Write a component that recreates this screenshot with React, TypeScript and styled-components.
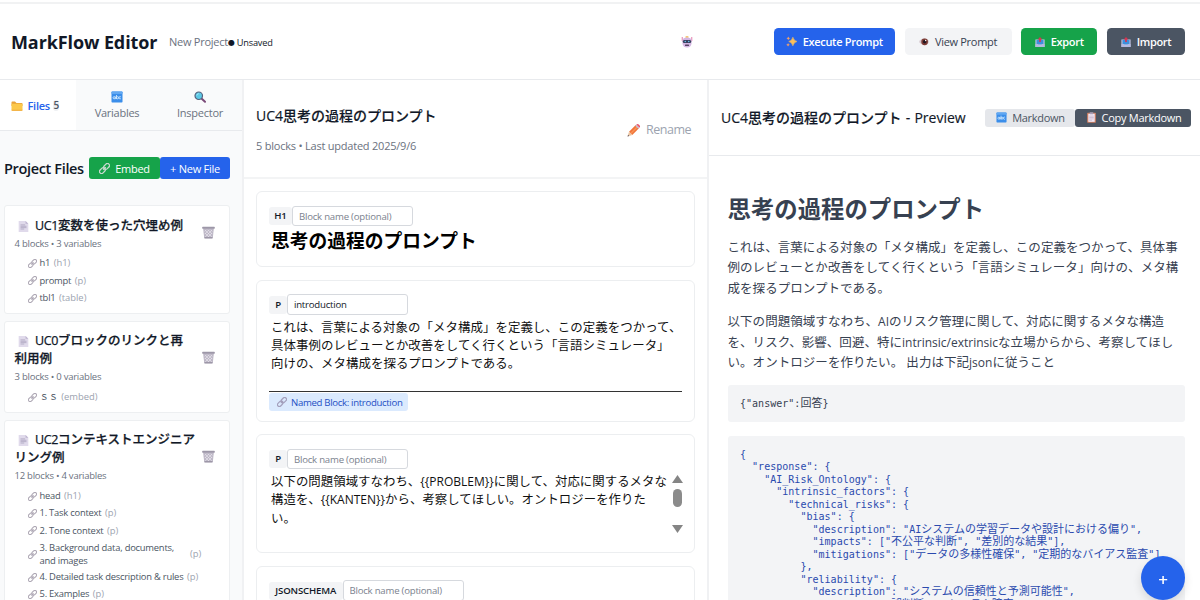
import React from "react";
import styled, { createGlobalStyle, css } from "styled-components";

const sans = `"Open Sans", "Noto Sans CJK JP", sans-serif`;
const mono = `"DejaVu Sans Mono", "Noto Sans CJK JP", monospace`;

const GlobalStyle = createGlobalStyle`
  *, *::before, *::after { box-sizing: border-box; }
  html, body { margin: 0; padding: 0; overflow: hidden; }
  body { font-family: ${sans}; background: #fff; color: #111827; }
  button, input { font-family: inherit; margin: 0; }
  h1, h2, h3, p, pre { margin: 0; }
`;

/* ---------- icons ---------- */

const Icon = styled.svg<{ $size: number; $faded?: boolean }>`
  width: ${(p) => p.$size}px;
  height: ${(p) => p.$size}px;
  flex: none;
  display: block;
  opacity: ${(p) => (p.$faded ? 0.7 : 1)};
`;

type IconProps = { size: number; faded?: boolean };

const FolderIcon = ({ size }: IconProps) => (
  <Icon $size={size} viewBox="0 0 24 24">
    <path d="M1 4.5Q1 3 2.5 3H8l3 3h10.500Q23 6 23 7.500V12H1z" fill="#e8a33a" />
    <rect x="1" y="7.500" width="22" height="14" rx="1.500" fill="#fcc84a" />
    <path d="M1 19.500h22v.500Q23 21.500 21.500 21.500h-19Q1 21.500 1 20z" fill="#f0ab3c" />
  </Icon>
);

const AbcIcon = ({ size }: IconProps) => (
  <Icon $size={size} viewBox="0 0 24 24">
    <rect x="1" y="1" width="22" height="22" rx="1.500" fill="#3b8eea" />
    <rect x="1" y="1" width="22" height="5" rx="1.500" fill="#62a8f2" />
    <g fill="none" stroke="#d6ecff" strokeWidth="1.700">
      <circle cx="6.300" cy="13.500" r="2.200" />
      <path d="M8.700 11v5.200M11 8v8.200M19.800 12a2.300 2.300 0 1 0 0 3" />
      <circle cx="13.200" cy="13.500" r="2.200" />
    </g>
  </Icon>
);

const SearchIcon = ({ size }: IconProps) => (
  <Icon $size={size} viewBox="0 0 24 24">
    <path d="M15.500 15.500l6.500 6" stroke="#7a4a78" strokeWidth="4" strokeLinecap="round" />
    <circle cx="9.500" cy="9.500" r="7.500" fill="#5cc9e6" stroke="#56617c" strokeWidth="2.400" />
    <path d="M5.500 9a4.500 4.500 0 0 1 4-3.800" fill="none" stroke="#b5effa" strokeWidth="1.600" />
  </Icon>
);

const LinkIcon = ({ size, faded, tone = "#8d8496" }: IconProps & { tone?: string }) => (
  <Icon $size={size} $faded={faded} viewBox="0 0 24 24">
    <g fill="none" stroke={tone} strokeWidth="2.800" transform="rotate(-45 12 12)">
      <rect x="-1.500" y="7.500" width="14" height="9" rx="4.500" />
      <rect x="11.500" y="7.500" width="14" height="9" rx="4.500" />
      <path d="M8 12h8" />
    </g>
  </Icon>
);

const PageIcon = ({ size }: IconProps) => (
  <Icon $size={size} viewBox="0 0 24 24">
    <path d="M1.500 0h15l6 6v18h-21z" fill="#e0daeb" />
    <path d="M16.500 0l6 6h-6z" fill="#bdb4cf" />
    <path d="M5.500 8.500h10M5.500 11.500h13M5.500 14.500h13M5.500 17.500h8" stroke="#aaa2bd" strokeWidth="1.700" />
  </Icon>
);

const TrashIcon = ({ size }: IconProps) => (
  <Icon $size={size} viewBox="0 0 24 24">
    <path d="M2 4h20l-2.200 18.500H4.200z" fill="#bdb7c6" />
    <path d="M6 8l12 12M11 7l8 8M16 7l3 3M5.500 13l7 7M18 8L6 20M13 7l-8 8M8 7L5 10M18.500 13l-7 7" stroke="#ece9f1" strokeWidth="1.200" />
    <rect x="0.500" y="1.500" width="23" height="3.800" rx="1" fill="#9d97a8" />
    <path d="M4.500 20.500h15l-.400 2.500H4.900z" fill="#9d97a8" />
  </Icon>
);

const PencilIcon = ({ size }: IconProps) => (
  <Icon $size={size} viewBox="0 0 24 24">
    <path d="M3.500 15L15 3.500l5.500 5.500L9 20.500z" fill="#f0743a" />
    <path d="M5.500 17L17 5.500l1.800 1.800L7.300 18.800z" fill="#f99355" />
    <path d="M3.500 15L1 23l8-2.500z" fill="#eac3a0" />
    <path d="M1.800 20.300L1 23l2.700-.800z" fill="#4b4350" />
    <path d="M14 4.500l2-2 5.500 5.500-2 2z" fill="#c9bccf" />
    <path d="M16 2.500q2-2 4.200 0l1.300 1.300q2 2 0 4.200z" fill="#e9526a" />
  </Icon>
);

const RobotIcon = ({ size }: IconProps) => (
  <Icon $size={size} viewBox="0 0 24 24">
    <path d="M2.500 2v8M21.500 2v8" stroke="#e58ab4" strokeWidth="2.200" />
    <rect x="9" y="0.500" width="6" height="3" rx="1" fill="#f3b64c" />
    <path d="M3 8q1-5 9-5t9 5v7q-1 8-9 8T3 15z" fill="#d3b6e2" />
    <rect x="3.500" y="8" width="17" height="6" rx="3" fill="#39405f" />
    <circle cx="8.500" cy="11" r="1.500" fill="#69c3ee" />
    <circle cx="15.500" cy="11" r="1.500" fill="#69c3ee" />
    <rect x="8" y="17" width="8" height="3" rx="1.200" fill="#564463" />
  </Icon>
);

const SparklesIcon = ({ size }: IconProps) => (
  <Icon $size={size} viewBox="0 0 24 24">
    <path d="M15 2.500q1.800 7.700 9 9.500-7.200 1.800-9 9.500-1.800-7.700-9-9.500 7.200-1.800 9-9.500z" fill="#fbbf5a" stroke="#fbbf5a" strokeWidth="1.200" />
    <path d="M5 1q.800 3.200 4 4-3.200.800-4 4-.800-3.200-4-4 3.200-.800 4-4z" fill="#f3a06a" />
    <path d="M4.500 15q.800 3.200 4 4-3.200.800-4 4-.800-3.200-4-4 3.200-.800 4-4z" fill="#f3a06a" />
  </Icon>
);

const EyeIcon = ({ size }: IconProps) => (
  <Icon $size={size} viewBox="0 0 24 24">
    <path d="M0 12Q5 3 13 3t11 9q-4 8-11 8T0 12z" fill="#d6c8cf" />
    <circle cx="13.500" cy="11.500" r="8" fill="#7b3c35" />
    <circle cx="13.500" cy="11.500" r="4.200" fill="#201722" />
    <circle cx="16" cy="8.500" r="1.700" fill="#fff" />
  </Icon>
);

const TrayIcon = ({ size }: IconProps) => (
  <Icon $size={size} viewBox="0 0 24 24">
    <path d="M1 6h22v18H1z" fill="#c9cbe8" />
    <path d="M3.500 7h17v11h-17z" fill="#3d8fdc" />
    <path d="M1 17h6l2 3h6l2-3h6v7H1z" fill="#b3b8de" />
    <path d="M12 0l5.500 6H14v6h-4V6H6.500z" fill="#d8324f" />
  </Icon>
);

const ClipboardIcon = ({ size }: IconProps) => (
  <Icon $size={size} viewBox="0 0 24 24">
    <rect x="2.500" y="1.500" width="19" height="22" rx="1.500" fill="#cf7f62" />
    <rect x="5" y="4" width="14" height="17.500" fill="#f2e8f4" />
    <rect x="8" y="0.500" width="8" height="4.500" rx="1" fill="#a59bb4" />
    <path d="M7 9h10M7 12h10M7 15h10M7 18h6" stroke="#bba9c6" strokeWidth="1.400" />
  </Icon>
);

/* ---------- text with separate metrics for Japanese runs ---------- */

const Cjk = styled.span<{ $size: number }>`
  font-family: "Noto Sans CJK JP", sans-serif;
  font-size: ${(p) => p.$size}px;
  letter-spacing: 0;
  line-height: 0;
`;

const Mixed = ({ text, size }: { text: string; size: number }) => (
  <>
    {text.split(/([\u3000-\u30ff\u4e00-\u9fff]+)/).map((part, i) =>
      i % 2 ? (
        <Cjk key={i} $size={size}>
          {part}
        </Cjk>
      ) : (
        part
      )
    )}
  </>
);

/* ---------- page frame ---------- */

const Page = styled.div`
  width: 1200px;
  height: 600px;
  display: flex;
  flex-direction: column;
  overflow: hidden;
  padding-top: 2px;
`;

const Header = styled.header`
  height: 78px;
  flex: none;
  display: flex;
  align-items: center;
  border-top: 2px solid #f1f2f3;
  border-bottom: 1px solid #e8eaed;
  padding: 0 15px 0 11px;
`;

const Brand = styled.h1`
  font-size: 18px;
  font-weight: 700;
  letter-spacing: -0.100px;
  line-height: 24px;
  width: 158px;
  white-space: nowrap;
`;

const ProjectName = styled.span`
  font-size: 11px;
  letter-spacing: -0.250px;
  color: #6b7280;
  width: 59px;
  white-space: nowrap;
`;

const Unsaved = styled.span`
  font-size: 9.200px;
  letter-spacing: -0.200px;
  color: #111827;
  white-space: nowrap;
  display: flex;
  align-items: center;
  gap: 2px;
  padding-top: 1px;
`;

const Dot = styled.span`
  font-family: "DejaVu Sans", sans-serif;
  font-size: 8px;
`;

const RobotSlot = styled.div`
  flex: 1;
  display: flex;
  justify-content: flex-end;
  padding-right: 81px;
`;

const Actions = styled.div`
  display: flex;
  gap: 9.750px;
`;

const ActionButton = styled.button<{ $bg: string; $fg?: string; $w: number; $weight?: number }>`
  width: ${(p) => p.$w}px;
  height: 27.500px;
  border: 0;
  border-radius: 4.500px;
  background: ${(p) => p.$bg};
  color: ${(p) => p.$fg ?? "#fff"};
  font-size: 11px;
  letter-spacing: -0.300px;
  font-weight: ${(p) => p.$weight ?? 600};
  display: flex;
  align-items: center;
  justify-content: center;
  gap: 6px;
  padding: 0;
  white-space: nowrap;
`;

const Columns = styled.div`
  flex: 1;
  min-height: 0;
  display: grid;
  grid-template-columns: 244px 465px 491px;
`;

/* ---------- sidebar ---------- */

const Sidebar = styled.aside`
  background: #f9fafb;
  border-right: 2px solid #f0f1f3;
  overflow: hidden;
  display: flex;
  flex-direction: column;
`;

const Tabs = styled.nav`
  height: 51px;
  flex: none;
  display: grid;
  grid-template-columns: 76px 82px 84px;
  border-bottom: 1px solid #e8eaed;
`;

const Tab = styled.div<{ $active?: boolean }>`
  display: flex;
  flex-direction: ${(p) => (p.$active ? "row" : "column")};
  align-items: center;
  justify-content: ${(p) => (p.$active ? "flex-start" : "center")};
  gap: ${(p) => (p.$active ? "4.500px" : "3px")};
  padding: ${(p) => (p.$active ? "1px 0 0 11px" : "1px 0 0")};
  background: ${(p) => (p.$active ? "#fff" : "transparent")};
  color: ${(p) => (p.$active ? "#2563eb" : "#6b7280")};
  font-size: 11px;
  letter-spacing: -0.250px;
  line-height: 14px;
  font-weight: ${(p) => (p.$active ? 600 : 500)};
`;

const Count = styled.span`
  background: #eef0f2;
  color: #4b5563;
  border-radius: 3px;
  font-size: 10px;
  line-height: 11px;
  margin-left: -1px;
`;

const FilesHead = styled.div`
  display: flex;
  align-items: center;
  height: 74px;
  flex: none;
  padding-left: 4px;
`;

const FilesTitle = styled.h2`
  width: 85px;
  font-size: 14.500px;
  letter-spacing: -0.350px;
  font-weight: 600;
  white-space: nowrap;
`;

const SmallButton = styled.button<{ $bg: string; $w: number }>`
  width: ${(p) => p.$w}px;
  height: 22px;
  border: 0;
  border-radius: 3px;
  background: ${(p) => p.$bg};
  color: #fff;
  font-size: 11px;
  letter-spacing: -0.250px;
  font-weight: 500;
  display: flex;
  align-items: center;
  justify-content: center;
  gap: 5px;
  padding: 0;
  white-space: nowrap;
`;

const FileList = styled.div`
  display: flex;
  flex-direction: column;
  gap: 6.800px;
  padding: 0 12px 0 4px;
`;

const FileCard = styled.section`
  background: #fff;
  border: 1px solid #edeff1;
  border-radius: 3px;
  padding: 10.700px 14px 8.500px 9.500px;
`;

const FileTop = styled.div`
  display: flex;
  align-items: center;
  justify-content: space-between;

  > ${Icon} {
    margin-bottom: 4px;
  }
`;

const FileTitle = styled.h3`
  width: 184px;
  font-size: 12.500px;
  letter-spacing: -0.400px;
  line-height: 18px;
  font-weight: 500;
  -webkit-text-stroke: 0.250px currentColor;
`;

const TitleIcon = styled.span`
  display: inline-block;
  vertical-align: -2px;
  margin: 0 6.500px 0 3px;
  height: 11px;
`;

const Meta = styled.div`
  font-size: 9.500px;
  letter-spacing: -0.240px;
  line-height: 18px;
  color: #6b7280;
`;

const BlockList = styled.div`
  display: flex;
  flex-direction: column;
  gap: 4.900px;
  padding: 4.500px 0 0 13.500px;
`;

const BlockItem = styled.div<{ $wrap?: boolean }>`
  display: flex;
  align-items: center;
  gap: 2.500px;
  font-size: 9.400px;
  letter-spacing: -0.220px;
  line-height: 12.500px;
  color: #4b5563;
  ${(p) =>
    p.$wrap &&
    css`
      margin-bottom: -1px;
    `}
`;

const BlockName = styled.span<{ $wrap?: boolean }>`
  ${(p) =>
    p.$wrap &&
    css`
      width: 147px;
    `}
`;

const Kind = styled.span`
  color: #9ca3af;
  margin-left: 1px;
  letter-spacing: 0;
`;

/* ---------- editor ---------- */

const Editor = styled.main`
  border-right: 2px solid #f0f1f3;
  overflow: hidden;
  display: flex;
  flex-direction: column;
`;

const EditorHead = styled.div`
  height: 99px;
  flex: none;
  display: flex;
  justify-content: space-between;
  align-items: center;
  padding: 2px 16px 0 12px;
  border-bottom: 2px solid #f3f4f5;
`;

const DocTitle = styled.h2`
  font-size: 14px;
  font-weight: 500;
  line-height: 20px;
  white-space: nowrap;
  -webkit-text-stroke: 0.150px currentColor;
`;

const DocMeta = styled.div`
  font-size: 11px;
  letter-spacing: -0.220px;
  line-height: 16px;
  margin-top: 12px;
  color: #6b7280;
`;

const Rename = styled.div`
  display: flex;
  align-items: center;
  gap: 5px;
  font-size: 12.500px;
  letter-spacing: -0.500px;
  color: #9ca3af;
`;

const Blocks = styled.div`
  display: flex;
  flex-direction: column;
  gap: 12.500px;
  padding: 12px 12px 0;
`;

const Block = styled.section<{ $h: number }>`
  height: ${(p) => p.$h}px;
  flex: none;
  border: 1px solid #eceef0;
  border-radius: 6px;
  padding: 13.500px 12px 0;
`;

const BlockBar = styled.div`
  display: flex;
  align-items: center;
  height: 21px;
`;

const Badge = styled.span<{ $w: number }>`
  width: ${(p) => p.$w}px;
  height: 18px;
  text-align: center;
  background: #f3f4f6;
  border-radius: 3px;
  font-size: 9.600px;
  letter-spacing: -0.150px;
  line-height: 18px;
  font-weight: 600;
  color: #111827;
`;

const NameInput = styled.input`
  width: 121px;
  height: 20.500px;
  border: 1px solid #d6d9de;
  border-radius: 3px;
  padding: 0 6px;
  font-size: 9.600px;
  letter-spacing: -0.220px;
  color: #111827;
  background: #fff;
  &::placeholder {
    color: #7b828e;
    opacity: 1;
  }
`;

const BlockHeading = styled.h2`
  font-size: 18.750px;
  line-height: 26px;
  font-weight: 700;
  color: #000;
  padding: 1.500px 0 0 2px;
`;

const BlockText = styled.p`
  font-size: 12px;
  line-height: 18.300px;
  color: #111;
  padding: 3.700px 0 0 2px;
  white-space: nowrap;
  ${Cjk} {
    letter-spacing: 0.050px;
  }
`;

const Rule = styled.div`
  height: 1px;
  background: #333;
  margin-top: 17.500px;
`;

const NamedTag = styled.div`
  display: flex;
  align-items: center;
  gap: 4px;
  height: 18px;
  width: 139px;
  margin-top: 1px;
  padding-left: 8px;
  background: #dbeafe;
  color: #1e4fc4;
  border-radius: 3px;
  font-size: 9.600px;
  letter-spacing: -0.320px;
  white-space: nowrap;
`;

const ScrollRow = styled.div`
  display: flex;
  justify-content: space-between;
`;

const Scrollbar = styled.div`
  width: 10px;
  height: 60px;
  flex: none;
  display: flex;
  flex-direction: column;
  align-items: center;
  margin-top: 5.500px;
`;

const Arrow = styled.svg`
  width: 11px;
  height: 8px;
  flex: none;
  fill: #858585;
`;

const Thumb = styled.div`
  width: 9px;
  height: 18px;
  border-radius: 4.500px;
  background: #8b8b8b;
  margin: 6px 0 18px;
`;

/* ---------- preview ---------- */

const Preview = styled.section`
  overflow: hidden;
  display: flex;
  flex-direction: column;
`;

const PreviewHead = styled.div`
  height: 76px;
  flex: none;
  display: flex;
  align-items: center;
  padding-left: 12px;
  border-bottom: 1px solid #e8eaed;
`;

const PreviewTitle = styled(DocTitle)`
  width: 264px;
  word-spacing: 0.500px;
`;

const PillButton = styled.button<{ $bg: string; $fg: string; $w: number; $weight: number }>`
  width: ${(p) => p.$w}px;
  height: 18px;
  border: 0;
  border-radius: 3px;
  background: ${(p) => p.$bg};
  color: ${(p) => p.$fg};
  font-size: 11px;
  letter-spacing: -0.280px;
  font-weight: ${(p) => p.$weight};
  display: flex;
  align-items: center;
  justify-content: center;
  gap: 5px;
  padding: 0 0 0 1px;
  white-space: nowrap;
`;

const Article = styled.article`
  padding: 36px 15px 0 18.500px;
  color: #374151;
`;

const PreviewHeading = styled.h1`
  font-size: 23.400px;
  line-height: 34px;
  font-weight: 700;
  margin-bottom: 12.200px;
`;

const Para = styled.p`
  font-size: 12px;
  line-height: 20.200px;
  margin-bottom: 13.500px;
  white-space: nowrap;
  ${Cjk} {
    letter-spacing: 0.050px;
  }

  & + pre {
    margin-top: -1.200px;
  }
`;

const Code = styled.pre<{ $color?: string }>`
  background: #f3f4f6;
  border-radius: 3px;
  padding: 12.800px 12.500px 11.200px;
  margin-bottom: 14px;
  font-family: ${mono};
  font-size: 10px;
  letter-spacing: 0.020px;
  line-height: 12.500px;
  color: ${(p) => p.$color ?? "#374151"};
  overflow: hidden;
`;

const CodeLine = styled.div`
  height: 12.500px;
`;

const Fab = styled.button`
  position: fixed;
  right: 15px;
  bottom: 0;
  width: 44px;
  height: 44px;
  border: 0;
  border-radius: 50%;
  background: #2563eb;
  color: #fff;
  display: flex;
  align-items: center;
  justify-content: center;
  padding: 3px 0 0;
  font-size: 17px;
  font-weight: 600;
  box-shadow: 0 4px 10px rgba(0, 0, 0, 0.12);
`;

/* ---------- data ---------- */

type Item = { name: string; kind: string; wrap?: boolean };
const files: { title: string[]; meta: string; items: Item[] }[] = [
  {
    title: ["UC1変数を使った穴埋め例"],
    meta: "4 blocks • 3 variables",
    items: [
      { name: "h1", kind: "h1" },
      { name: "prompt", kind: "p" },
      { name: "tbl1", kind: "table" },
    ],
  },
  {
    title: ["UC0ブロックのリンクと再", "利用例"],
    meta: "3 blocks • 0 variables",
    items: [{ name: "ｓｓ", kind: "embed" }],
  },
  {
    title: ["UC2コンテキストエンジニア", "リング例"],
    meta: "12 blocks • 4 variables",
    items: [
      { name: "head", kind: "h1" },
      { name: "1. Task context", kind: "p" },
      { name: "2. Tone context", kind: "p" },
      { name: "3. Background data, documents, and images", kind: "p", wrap: true },
      { name: "4. Detailed task description & rules", kind: "p" },
      { name: "5. Examples", kind: "p" },
    ],
  },
];

const intro = [
  "これは、言葉による対象の「メタ構成」を定義し、この定義をつかって、",
  "具体事例のレビューとか改善をしてく行くという「言語シミュレータ」",
  "向けの、メタ構成を探るプロンプトである。",
];

const problem = [
  "以下の問題領域すなわち、{{PROBLEM}}に関して、対応に関するメタな",
  "構造を、{{KANTEN}}から、考察してほしい。オントロジーを作りた",
  "い。",
];

const previewIntro = [
  "これは、言葉による対象の「メタ構成」を定義し、この定義をつかって、具体事",
  "例のレビューとか改善をしてく行くという「言語シミュレータ」向けの、メタ構",
  "成を探るプロンプトである。",
];

const previewProblem = [
  "以下の問題領域すなわち、AIのリスク管理に関して、対応に関するメタな構造",
  "を、リスク、影響、回避、特にintrinsic/extrinsicな立場からから、考察してほし",
  "い。オントロジーを作りたい。 出力は下記jsonに従うこと",
];

const schema = [
  "{",
  '  "response": {',
  '    "AI_Risk_Ontology": {',
  '      "intrinsic_factors": {',
  '        "technical_risks": {',
  '          "bias": {',
  '            "description": "AIシステムの学習データや設計における偏り",',
  '            "impacts": ["不公平な判断", "差別的な結果"],',
  '            "mitigations": ["データの多様性確保", "定期的なバイアス監査"]',
  "          },",
  '          "reliability": {',
  '            "description": "システムの信頼性と予測可能性",',
  '            "impacts": ["誤判断", "システム障害"],',
];

const Lines = ({ lines, size }: { lines: string[]; size: number }) => (
  <>
    {lines.map((line, i) => (
      <React.Fragment key={i}>
        {i > 0 && <br />}
        <Mixed text={line} size={size} />
      </React.Fragment>
    ))}
  </>
);

const placeholder = "Block name (optional)";

export default function App() {
  return (
    <>
      <GlobalStyle />
      <Page>
        <Header>
          <Brand>MarkFlow Editor</Brand>
          <ProjectName>New Project</ProjectName>
          <Unsaved>
            <Dot>●</Dot>
            Unsaved
          </Unsaved>
          <RobotSlot>
            <RobotIcon size={12} />
          </RobotSlot>
          <Actions>
            <ActionButton $bg="#2563eb" $w={121}>
              <SparklesIcon size={11} />
              Execute Prompt
            </ActionButton>
            <ActionButton $bg="#f3f4f6" $fg="#374151" $w={107} $weight={500}>
              <EyeIcon size={10} />
              View Prompt
            </ActionButton>
            <ActionButton $bg="#16a34a" $w={76}>
              <TrayIcon size={10} />
              Export
            </ActionButton>
            <ActionButton $bg="#4b5563" $w={78}>
              <TrayIcon size={10} />
              Import
            </ActionButton>
          </Actions>
        </Header>

        <Columns>
          <Sidebar>
            <Tabs>
              <Tab $active>
                <FolderIcon size={12} />
                Files
                <Count>5</Count>
              </Tab>
              <Tab>
                <AbcIcon size={12} />
                Variables
              </Tab>
              <Tab>
                <SearchIcon size={12} />
                Inspector
              </Tab>
            </Tabs>
            <FilesHead>
              <FilesTitle>Project Files</FilesTitle>
              <SmallButton $bg="#16a34a" $w={71}>
                <LinkIcon size={11} tone="#c9d9cf" />
                Embed
              </SmallButton>
              <SmallButton $bg="#2563eb" $w={70}>
                + New File
              </SmallButton>
            </FilesHead>
            <FileList>
              {files.map((f) => (
                <FileCard key={f.meta}>
                  <FileTop>
                    <div>
                      <FileTitle>
                        <TitleIcon>
                          <PageIcon size={11} />
                        </TitleIcon>
                        <Lines lines={f.title} size={12.5} />
                      </FileTitle>
                      <Meta>{f.meta}</Meta>
                    </div>
                    <TrashIcon size={13} />
                  </FileTop>
                  <BlockList>
                    {f.items.map((it) => (
                      <BlockItem key={it.name} $wrap={it.wrap}>
                        <LinkIcon size={9} faded />
                        <BlockName $wrap={it.wrap}>{it.name}</BlockName>
                        <Kind>({it.kind})</Kind>
                      </BlockItem>
                    ))}
                  </BlockList>
                </FileCard>
              ))}
            </FileList>
          </Sidebar>

          <Editor>
            <EditorHead>
              <div>
                <DocTitle>
                  <Mixed text="UC4思考の過程のプロンプト" size={14} />
                </DocTitle>
                <DocMeta>5 blocks • Last updated 2025/9/6</DocMeta>
              </div>
              <Rename>
                <PencilIcon size={14} />
                Rename
              </Rename>
            </EditorHead>
            <Blocks>
              <Block $h={76}>
                <BlockBar>
                  <Badge $w={23}>H1</Badge>
                  <NameInput placeholder={placeholder} />
                </BlockBar>
                <BlockHeading>思考の過程のプロンプト</BlockHeading>
              </Block>
              <Block $h={142}>
                <BlockBar>
                  <Badge $w={18}>P</Badge>
                  <NameInput defaultValue="introduction" />
                </BlockBar>
                <BlockText>
                  <Lines lines={intro} size={12.45} />
                </BlockText>
                <Rule />
                <NamedTag>
                  <LinkIcon size={10} faded tone="#8c7fa0" />
                  Named Block: introduction
                </NamedTag>
              </Block>
              <Block $h={119}>
                <BlockBar>
                  <Badge $w={18}>P</Badge>
                  <NameInput placeholder={placeholder} />
                </BlockBar>
                <ScrollRow>
                  <BlockText>
                    <Lines lines={problem} size={12.4} />
                  </BlockText>
                  <Scrollbar>
                    <Arrow viewBox="0 0 11 8">
                      <path d="M5.500 0L11 8H0z" />
                    </Arrow>
                    <Thumb />
                    <Arrow viewBox="0 0 11 8">
                      <path d="M0 0h11L5.500 8z" />
                    </Arrow>
                  </Scrollbar>
                </ScrollRow>
              </Block>
              <Block $h={119}>
                <BlockBar>
                  <Badge $w={73.5}>JSONSCHEMA</Badge>
                  <NameInput placeholder={placeholder} />
                </BlockBar>
              </Block>
            </Blocks>
          </Editor>

          <Preview>
            <PreviewHead>
              <PreviewTitle>
                <Mixed text="UC4思考の過程のプロンプト - Preview" size={14} />
              </PreviewTitle>
              <PillButton $bg="#e5e7eb" $fg="#4b5563" $w={90} $weight={400}>
                <AbcIcon size={11} />
                Markdown
              </PillButton>
              <PillButton $bg="#4b5563" $fg="#fff" $w={116} $weight={500}>
                <ClipboardIcon size={11} />
                Copy Markdown
              </PillButton>
            </PreviewHead>
            <Article>
              <PreviewHeading>思考の過程のプロンプト</PreviewHeading>
              <Para>
                <Lines lines={previewIntro} size={12.5} />
              </Para>
              <Para>
                <Lines lines={previewProblem} size={12.5} />
              </Para>
              <Code>
                <CodeLine>
                  <Mixed text={'{"answer":回答}'} size={11} />
                </CodeLine>
              </Code>
              <Code $color="#2a4aae">
                {schema.map((line, i) => (
                  <CodeLine key={i}>
                    <Mixed text={line} size={11} />
                  </CodeLine>
                ))}
              </Code>
            </Article>
          </Preview>
        </Columns>
        <Fab>+</Fab>
      </Page>
    </>
  );
}
